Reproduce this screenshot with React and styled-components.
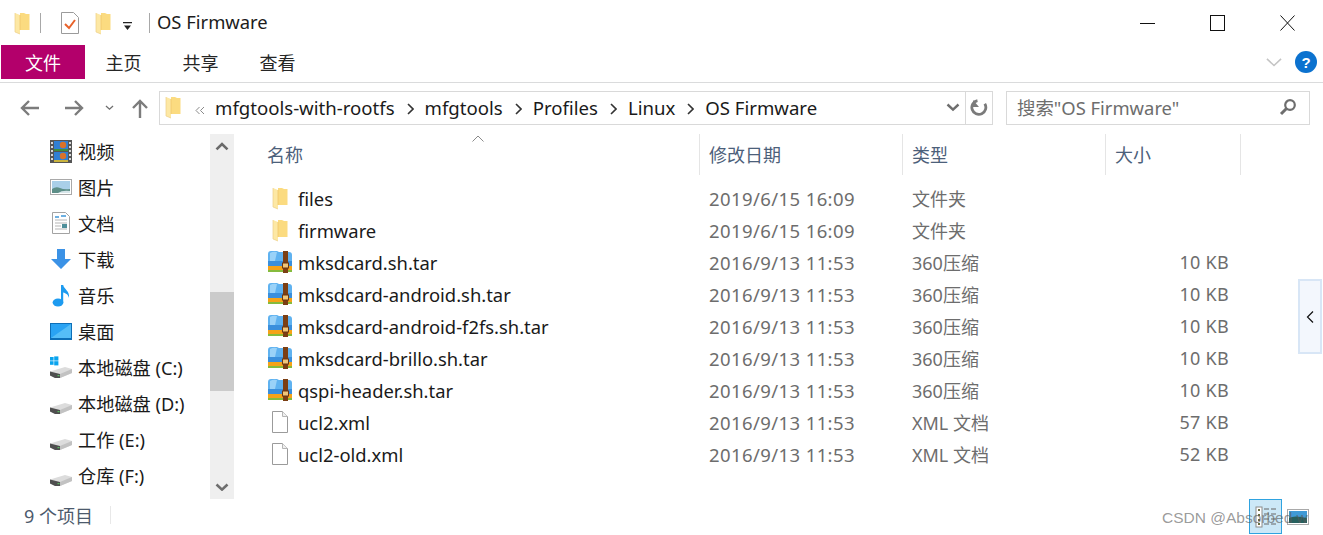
import styled, { createGlobalStyle } from "styled-components";

const GlobalStyle = createGlobalStyle`
  html, body { margin: 0; padding: 0; background: #fff; }
  body { font-family: "Noto Sans", "Noto Sans CJK SC", sans-serif; color: #1a1a1a; }
  svg { flex-shrink: 0; display: block; }
`;

const Window = styled.div`
  position: relative;
  width: 1323px;
  height: 535px;
  overflow: hidden;
  display: flex;
  flex-direction: column;
  background: #fff;
`;

const TitleBar = styled.div`
  height: 45px;
  display: flex;
  align-items: center;
  padding-left: 10px;
  box-sizing: border-box;
`;

const QuickButton = styled.div`
  display: flex;
  align-items: center;
  justify-content: center;
  width: ${(p) => p.$w || 16}px;
  margin-right: ${(p) => p.$mr || 0}px;
  height: 24px;
`;

const DropArrow = styled.div`
  width: 10px;
  margin-right: 11px;
  padding-top: 8px;
`;

const TitleSep = styled.div`
  width: 1px;
  height: 20px;
  background: #a8a8a8;
  margin-right: ${(p) => p.$mr || 0}px;
`;

const Title = styled.div`
  font-size: 18.4px;
  color: #1c1c1c;
  flex: 1;
  margin-top: -2px;
`;

const WindowButtons = styled.div`
  display: flex;
  align-items: center;
  gap: 55px;
  padding-right: 28px;
  margin-top: 1px;
`;

const Ribbon = styled.div`
  height: 38px;
  display: flex;
  align-items: flex-start;
  padding-left: 1px;
  border-bottom: 1px solid #dadbdc;
  box-sizing: border-box;
`;

const Tab = styled.div`
  width: ${(p) => (p.$active ? 84 : 77)}px;
  height: 34px;
  display: flex;
  align-items: center;
  justify-content: center;
  font-size: 18px;
  color: ${(p) => (p.$active ? "#fff" : "#262626")};
  background: ${(p) => (p.$active ? "#b3006b" : "transparent")};
`;

const RibbonRight = styled.div`
  margin-left: auto;
  display: flex;
  align-items: center;
  gap: 12px;
  padding: 6px 6px 0 0;
`;

const HelpBadge = styled.div`
  width: 22px;
  height: 22px;
  border-radius: 50%;
  background: #0c72cf;
  color: #fff;
  font: bold 15px "Liberation Sans", sans-serif;
  display: flex;
  align-items: center;
  justify-content: center;
`;

const AddressRow = styled.div`
  height: 50px;
  display: flex;
  align-items: center;
  padding: 0 13px 0 19px;
  box-sizing: border-box;
`;

const NavIcons = styled.div`
  width: 140px;
  display: flex;
  align-items: center;
`;

const NavGap = styled.span`
  width: ${(p) => p.$w}px;
`;

const AddressBar = styled.div`
  width: 834px;
  height: 34px;
  border: 1px solid #d9d9d9;
  box-sizing: border-box;
  display: flex;
  align-items: center;
  padding: 0 0 2px 1px;
  font-size: 18.6px;
  color: #1a1a1a;
`;

const Crumb = styled.span`
  margin-left: ${(p) => p.$ml || 0}px;
  white-space: nowrap;
`;

const CrumbArrow = styled.span`
  display: inline-flex;
  margin: 3px 11px 0 12px;
`;

const AddressEnd = styled.div`
  margin-left: auto;
  display: flex;
  align-items: center;
  height: 34px;
  margin-top: 1px;
`;

const Refresh = styled.div`
  width: 26px;
  height: 100%;
  border-left: 1px solid #d9d9d9;
  margin-left: 5px;
  display: flex;
  align-items: center;
  justify-content: center;
`;

const SearchBox = styled.div`
  width: 304px;
  height: 34px;
  margin-left: 13px;
  border: 1px solid #d9d9d9;
  box-sizing: border-box;
  display: flex;
  align-items: center;
  justify-content: space-between;
  padding: 0 12px 2px 10px;
  font-size: 18.4px;
  color: #6d6d6d;
  white-space: nowrap;
`;

const Body = styled.div`
  flex: 1;
  display: flex;
  min-height: 0;
  padding-top: 1px;
`;

const Sidebar = styled.div`
  width: 210px;
  margin-top: -1px;
  overflow: hidden;
  box-sizing: border-box;
`;

const NavItem = styled.div`
  height: 36px;
  display: flex;
  align-items: center;
  padding-left: 50px;
  font-size: 18.2px;
  color: #1a1a1a;
  white-space: nowrap;
`;

const NavIcon = styled.div`
  width: 22px;
  height: 24px;
  margin-right: 6px;
  display: flex;
  align-items: center;
  justify-content: center;
`;

const ScrollTrack = styled.div`
  width: 24px;
  height: 365px;
  background: #efefef;
  display: flex;
  flex-direction: column;
  align-items: stretch;
`;

const ScrollButton = styled.div`
  height: 24px;
  display: flex;
  align-items: center;
  justify-content: center;
`;

const ScrollThumb = styled.div`
  height: 99px;
  background: #cbcbcb;
  margin-top: 134px;
  margin-bottom: auto;
`;

const Pane = styled.div`
  flex: 1;
  padding-left: 33px;
  display: flex;
  flex-direction: column;
  min-width: 0;
`;

const HeaderRow = styled.div`
  position: relative;
  display: flex;
  height: 41px;
  align-items: flex-start;
  margin-bottom: 7px;
`;

const SortArrow = styled.div`
  position: absolute;
  left: 205px;
  top: 1px;
`;

const HeaderCell = styled.div`
  width: ${(p) => p.$w}px;
  height: 41px;
  box-sizing: border-box;
  display: flex;
  align-items: center;
  padding: 0 0 2px ${(p) => p.$pl}px;
  font-size: 18px;
  color: #4c607a;
  border-right: 1px solid #e5e5e5;
`;

const FileRow = styled.div`
  height: 32px;
  display: flex;
  align-items: center;
  font-size: 18px;
`;

const NameCell = styled.div`
  width: 433px;
  display: flex;
  align-items: center;
  color: #1a1a1a;
  white-space: nowrap;
  font-size: 18.4px;
`;

const FileIcon = styled.div`
  width: 24px;
  height: 24px;
  margin-right: 6px;
  margin-left: 1px;
  display: flex;
  align-items: center;
  justify-content: center;
`;

const DataCell = styled.div`
  width: ${(p) => p.$w}px;
  padding-left: ${(p) => p.$pl || 0}px;
  box-sizing: border-box;
  color: #6d6d6d;
  white-space: nowrap;
  text-align: ${(p) => p.$align || "left"};
`;

const DateCell = styled(DataCell)`
  font-size: 18.5px;
  letter-spacing: 0.4px;
`;

const SizeCell = styled(DataCell)`
  letter-spacing: 0.3px;
`;

const PreviewToggle = styled.div`
  position: absolute;
  right: 1px;
  top: 279px;
  width: 24px;
  height: 75px;
  box-sizing: border-box;
  background: #f3f7fd;
  border: 2px solid #d8e6f6;
  display: flex;
  align-items: center;
  justify-content: center;
`;

const StatusBar = styled.div`
  height: 35px;
  box-sizing: border-box;
  display: flex;
  align-items: center;
  padding: 0 0 5px 24px;
  font-size: 18px;
  color: #4c5a6c;
`;

const StatusSep = styled.div`
  width: 1px;
  height: 18px;
  background: #e8e8e8;
  margin-left: 17px;
`;

const ViewButtons = styled.div`
  margin-left: auto;
  display: flex;
  align-items: center;
  padding-right: 9px;
  align-self: flex-start;
  margin-top: -1px;
`;

const ViewButton = styled.div`
  width: ${(p) => (p.$active ? 33 : 32)}px;
  height: 35px;
  box-sizing: border-box;
  display: flex;
  align-items: center;
  justify-content: center;
  border: ${(p) => (p.$active ? "1px solid #2fa3e0" : "none")};
  background: ${(p) => (p.$active ? "#cce8f7" : "transparent")};
`;

const Watermark = styled.div`
  position: absolute;
  left: 1162px;
  top: 509px;
  font: 15.5px "Liberation Sans", sans-serif;
  color: rgba(90, 90, 90, 0.62);
  white-space: nowrap;
`;

const FolderIcon = () => (
  <svg width="24" height="24" viewBox="0 0 24 24">
    <path d="M10 2h4l2 1h3.500v16H10z" fill="#fbdb80" />
    <path d="M5 2l5 2v19l-5-2z" fill="#fde8a4" />
    <path d="M5 2v19l5 2" fill="none" stroke="#eccf86" strokeWidth=".7" />
    <path d="M10 4v15" stroke="#f0c66a" strokeWidth=".8" />
  </svg>
);

const ArchiveIcon = () => (
  <svg width="24" height="24" viewBox="0 0 24 24">
    <path d="M0 4q0-3 3-3h6l2 1h10q3 0 3 3v11H0z" fill="#5fb2f0" />
    <path d="M2 3q3-2 7-1l-2 9H2z" fill="#9ad2f8" />
    <rect x="0" y="11" width="24" height="5" fill="#3a8fdc" />
    <rect x="0" y="16" width="24" height="4" fill="#f5a318" />
    <rect x="0" y="20" width="24" height="2" fill="#86bb3d" />
    <rect x="15" y="1" width="5" height="22" fill="#7b3f14" />
    <rect x="14.500" y="13" width="6" height="5" fill="#f0c67a" stroke="#6b3510" />
  </svg>
);

const DocIcon = () => (
  <svg width="24" height="24" viewBox="0 0 24 24">
    <path d="M4.500 1.500h10l5 5v16h-15z" fill="#fff" stroke="#9b9b9b" />
    <path d="M14.500 1.500v5h5" fill="#f0f0f0" stroke="#b5b5b5" />
  </svg>
);

const ChevronDown = ({ w = 14, c = "#6e6e6e", sw = 2.4 }) => (
  <svg width={w} height={w * 0.6} viewBox="0 0 14 8.400">
    <path d="M1.500 1.500L7 6.600l5.500-5.100" fill="none" stroke={c} strokeWidth={sw} />
  </svg>
);

const ChevronUp = () => (
  <svg width="14" height="9" viewBox="0 0 14 9">
    <path d="M1.500 7.400L7 2l5.500 5.400" fill="none" stroke="#6a6a6a" strokeWidth="2.600" />
  </svg>
);

const SmallArrow = () => (
  <svg width="7" height="12" viewBox="0 0 7 12">
    <path d="M1 1l5 5-5 5" fill="none" stroke="#333" strokeWidth="1.600" />
  </svg>
);

const DriveIcon = ({ win }) => (
  <svg width="22" height="24" viewBox="0 0 22 24">
    {win && (
      <g fill="#0aa4ee">
        <rect x="0" y="2" width="3.600" height="3.600" />
        <rect x="4.200" y="1.400" width="4.200" height="4.200" />
        <rect x="0" y="6.200" width="3.600" height="3.600" />
        <rect x="4.200" y="6.200" width="4.200" height="4.200" />
      </g>
    )}
    <path d="M0 16.500L15 12l7 2v4l-12 5H5l-5-2.500z" fill="#dcdcdc" />
    <path d="M22 14v4l-12 5v-4z" fill="#c2c2c2" />
    <path d="M0 16.500l10 2.500v4H5l-5-2.500z" fill="#4f4f4f" />
    <rect x="7.500" y="20" width="2" height="1.200" fill="#5dbb63" />
  </svg>
);

const navIcons = {
  video: (
    <svg width="22" height="23" viewBox="0 0 22 23">
      <rect width="22" height="23" fill="#555" />
      <rect x="4" y="1" width="14" height="10" fill="#2f7fd4" />
      <rect x="4" y="12" width="14" height="10" fill="#2f7fd4" />
      <circle cx="13" cy="5" r="3.200" fill="#d9722a" />
      <circle cx="13" cy="16" r="3.200" fill="#d9722a" />
      <rect x="4" y="9" width="14" height="2" fill="#3d8f40" />
      <rect x="4" y="20" width="14" height="2" fill="#c9b33d" />
      {[2, 6, 10, 14, 18].map((y) => (
        <g key={y} fill="#d8d8d8">
          <rect x="1" y={y} width="2" height="2" />
          <rect x="19" y={y} width="2" height="2" />
        </g>
      ))}
    </svg>
  ),
  pictures: (
    <svg width="22" height="16" viewBox="0 0 22 16">
      <rect x=".5" y=".5" width="21" height="15" fill="#fff" stroke="#a9a9a9" />
      <rect x="2" y="2" width="18" height="12" fill="#a9cfe8" />
      <path d="M2 10q4-3 8-1t10 1v4H2z" fill="#5d8f88" />
      <path d="M8 14q4-3 12-2v2z" fill="#d7e6ea" />
    </svg>
  ),
  docs: (
    <svg width="18" height="22" viewBox="0 0 18 22">
      <path d="M.5.500h13l4 4v17H.5z" fill="#fff" stroke="#a3a3a3" />
      <path d="M3 5h4M9 4h5" stroke="#3f97d8" strokeWidth="1.400" />
      <path d="M3 8h12M3 11h12M3 14h6M3 17h12" stroke="#b5b5b5" />
      <rect x="10" y="12" width="5" height="4" fill="#4f8f9a" />
    </svg>
  ),
  down: (
    <svg width="20" height="20" viewBox="0 0 20 20">
      <path d="M6 0h8v10h6l-10 10L0 10h6z" fill="#3b92e6" />
    </svg>
  ),
  music: (
    <svg width="18" height="23" viewBox="0 0 18 23">
      <ellipse cx="6" cy="18.500" rx="5.400" ry="4" fill="#1d9bf0" />
      <path d="M9 1h2.200c.6 4 6.800 6 5.800 13-.4-3-3.200-5-5.800-5.500V18.500H9z" fill="#1d9bf0" />
    </svg>
  ),
  desktop: (
    <svg width="22" height="17" viewBox="0 0 22 17">
      <rect width="22" height="17" fill="#0d6fb8" />
      <rect x="1" y="1" width="20" height="14" fill="#2aa3f3" />
      <path d="M1 15L21 1v14z" fill="#55bdf7" />
    </svg>
  ),
};

const navItems = [
  { icon: navIcons.video, label: "视频" },
  { icon: navIcons.pictures, label: "图片" },
  { icon: navIcons.docs, label: "文档" },
  { icon: navIcons.down, label: "下载" },
  { icon: navIcons.music, label: "音乐" },
  { icon: navIcons.desktop, label: "桌面" },
  { icon: <DriveIcon win />, label: "本地磁盘 (C:)" },
  { icon: <DriveIcon />, label: "本地磁盘 (D:)" },
  { icon: <DriveIcon />, label: "工作 (E:)" },
  { icon: <DriveIcon />, label: "仓库 (F:)" },
];

const files = [
  { name: "files", icon: <FolderIcon />, date: "2019/6/15 16:09", type: "文件夹", size: "" },
  { name: "firmware", icon: <FolderIcon />, date: "2019/6/15 16:09", type: "文件夹", size: "" },
  { name: "mksdcard.sh.tar", icon: <ArchiveIcon />, date: "2016/9/13 11:53", type: "360压缩", size: "10 KB" },
  { name: "mksdcard-android.sh.tar", icon: <ArchiveIcon />, date: "2016/9/13 11:53", type: "360压缩", size: "10 KB" },
  { name: "mksdcard-android-f2fs.sh.tar", icon: <ArchiveIcon />, date: "2016/9/13 11:53", type: "360压缩", size: "10 KB" },
  { name: "mksdcard-brillo.sh.tar", icon: <ArchiveIcon />, date: "2016/9/13 11:53", type: "360压缩", size: "10 KB" },
  { name: "qspi-header.sh.tar", icon: <ArchiveIcon />, date: "2016/9/13 11:53", type: "360压缩", size: "10 KB" },
  { name: "ucl2.xml", icon: <DocIcon />, date: "2016/9/13 11:53", type: "XML 文档", size: "57 KB" },
  { name: "ucl2-old.xml", icon: <DocIcon />, date: "2016/9/13 11:53", type: "XML 文档", size: "52 KB" },
];

export default function App() {
  return (
    <Window>
      <GlobalStyle />
      <TitleBar>
        <FolderIcon />
        <QuickButton $w={1} $mr={5} />
        <TitleSep $mr={20} />
        <QuickButton $w={18} $mr={15}>
          <svg width="18" height="22" viewBox="0 0 18 22">
            <path d="M.5.500h12l5 5v16H.5z" fill="#fff" stroke="#9b9b9b" />
            <path d="M4 12l4 4 6-8" fill="none" stroke="#e8622a" strokeWidth="2" />
          </svg>
        </QuickButton>
        <QuickButton $w={18} $mr={11}><FolderIcon /></QuickButton>
        <DropArrow $mr={11}>
          <svg width="9" height="9" viewBox="0 0 9 9">
            <path d="M0 0h9v1.200H0zM1 3.500h7L4.500 8z" fill="#222" />
          </svg>
        </DropArrow>
        <NavGap $w={5} />
        <TitleSep $mr={7} />
        <Title>OS Firmware</Title>
        <WindowButtons>
          <svg width="15" height="16" viewBox="0 0 15 16">
            <path d="M0 8.500h15" stroke="#111" strokeWidth="1" />
          </svg>
          <svg width="15" height="16" viewBox="0 0 15 16">
            <rect x=".5" y=".5" width="14" height="15" fill="none" stroke="#111" />
          </svg>
          <svg width="15" height="16" viewBox="0 0 15 16">
            <path d="M.5.500l14 15M14.500.500l-14 15" stroke="#111" />
          </svg>
        </WindowButtons>
      </TitleBar>

      <Ribbon>
        <Tab $active>文件</Tab>
        <Tab>主页</Tab>
        <Tab>共享</Tab>
        <Tab>查看</Tab>
        <RibbonRight>
          <ChevronDown w={18} c="#c4c4c4" sw={1.200} />
          <HelpBadge>?</HelpBadge>
        </RibbonRight>
      </Ribbon>

      <AddressRow>
        <NavIcons>
          <svg width="21" height="18" viewBox="0 0 21 18">
            <path d="M20 9H3M10 2L3 9l7 7" fill="none" stroke="#7c7c7c" strokeWidth="2.400" />
          </svg>
          <NavGap $w={24} />
          <svg width="21" height="18" viewBox="0 0 21 18">
            <path d="M1 9h17M11 2l7 7-7 7" fill="none" stroke="#7c7c7c" strokeWidth="2.400" />
          </svg>
          <NavGap $w={20} />
          <ChevronDown w={9} sw={2} />
          <NavGap $w={17} />
          <svg width="18" height="20" viewBox="0 0 18 20">
            <path d="M9 20V3M2 10l7-7 7 7" fill="none" stroke="#7c7c7c" strokeWidth="2.400" />
          </svg>
        </NavIcons>
        <AddressBar>
          <FolderIcon />
          <Crumb $ml={10}>
            <svg width="10" height="9" viewBox="0 0 10 9" style={{ display: "inline" }}>
              <path d="M4.500 1L1 4.500 4.500 8M9 1L5.500 4.500 9 8" fill="none" stroke="#8a8a8a" />
            </svg>
          </Crumb>
          <Crumb $ml={10}>mfgtools-with-rootfs</Crumb>
          <CrumbArrow><SmallArrow /></CrumbArrow>
          <Crumb>mfgtools</Crumb>
          <CrumbArrow><SmallArrow /></CrumbArrow>
          <Crumb>Profiles</Crumb>
          <CrumbArrow><SmallArrow /></CrumbArrow>
          <Crumb>Linux</Crumb>
          <CrumbArrow><SmallArrow /></CrumbArrow>
          <Crumb>OS Firmware</Crumb>
          <AddressEnd>
            <ChevronDown w={14} />
            <Refresh>
              <svg width="18" height="18" viewBox="0 0 18 18">
                <path d="M5 2.500A7 7 0 1 0 13 3" fill="none" stroke="#7a7a7a" strokeWidth="2.800" transform="rotate(20 9 9)" />
                <path d="M3 1v7h6z" fill="#7a7a7a" />
              </svg>
            </Refresh>
          </AddressEnd>
        </AddressBar>
        <SearchBox>
          搜索"OS Firmware"
          <svg width="18" height="18" viewBox="0 0 18 18">
            <circle cx="11" cy="7" r="4.800" fill="none" stroke="#6e6e6e" strokeWidth="2.200" />
            <path d="M7.500 10.500L2 16" stroke="#6e6e6e" strokeWidth="3" />
          </svg>
        </SearchBox>
      </AddressRow>

      <Body>
        <Sidebar>
          {navItems.map((item) => (
            <NavItem key={item.label}>
              <NavIcon>{item.icon}</NavIcon>
              {item.label}
            </NavItem>
          ))}
        </Sidebar>
        <ScrollTrack>
          <ScrollButton><ChevronUp /></ScrollButton>
          <ScrollThumb />
          <ScrollButton><ChevronDown w={14} sw={2.600} /></ScrollButton>
        </ScrollTrack>
        <Pane>
          <HeaderRow>
            <SortArrow>
              <svg width="12" height="7" viewBox="0 0 12 7">
                <path d="M.5 6.500L6 1l5.500 5.500" fill="none" stroke="#8a8a8a" />
              </svg>
            </SortArrow>
            <HeaderCell $w={433} $pl={0}>名称</HeaderCell>
            <HeaderCell $w={203} $pl={9}>修改日期</HeaderCell>
            <HeaderCell $w={203} $pl={9}>类型</HeaderCell>
            <HeaderCell $w={135} $pl={9}>大小</HeaderCell>
          </HeaderRow>
          {files.map((f) => (
            <FileRow key={f.name}>
              <NameCell>
                <FileIcon>{f.icon}</FileIcon>
                {f.name}
              </NameCell>
              <DateCell $w={203} $pl={9}>{f.date}</DateCell>
              <DataCell $w={203} $pl={9}>{f.type}</DataCell>
              <SizeCell $w={123} $align="right">{f.size}</SizeCell>
            </FileRow>
          ))}
        </Pane>
      </Body>

      <StatusBar>
        9 个项目
        <StatusSep />
        <ViewButtons>
          <ViewButton $active>
            <svg width="22" height="22" viewBox="0 0 22 22">
              <rect x="1" y="1" width="6" height="20" fill="#fff" stroke="#8c8c8c" />
              <path d="M3 4h2M3 9h2M3 14h2M3 18h2" stroke="#6b6b3c" strokeWidth="2" />
              <path d="M9 3h5M16 3h5M9 8h5M16 8h5M9 13h5M16 13h5M9 18h5M16 18h5" stroke="#666" />
            </svg>
          </ViewButton>
          <ViewButton>
            <svg width="22" height="16" viewBox="0 0 22 16">
              <rect x=".5" y=".5" width="21" height="15" fill="#fff" stroke="#a9a9a9" />
              <rect x="2" y="2" width="18" height="12" fill="#3f9ad6" />
              <path d="M2 9q5-3 18 0v5H2z" fill="#27605e" />
            </svg>
          </ViewButton>
        </ViewButtons>
      </StatusBar>

      <PreviewToggle>
        <svg width="8" height="12" viewBox="0 0 8 12">
          <path d="M7 .5L1.500 6 7 11.500" fill="none" stroke="#111" strokeWidth="1.200" />
        </svg>
      </PreviewToggle>
      <Watermark>CSDN @Absorbed w</Watermark>
    </Window>
  );
}
